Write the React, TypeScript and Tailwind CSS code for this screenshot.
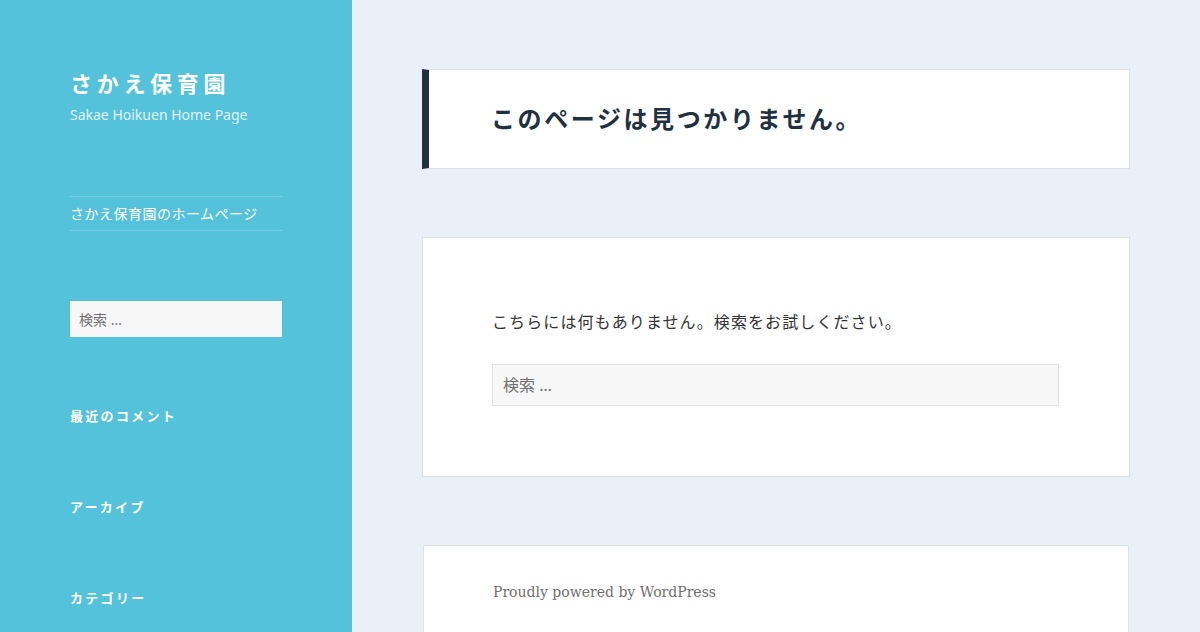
const sans = "font-['Noto_Sans','Noto_Sans_CJK_JP',sans-serif]";

const WidgetTitle = ({ children }: { children: string }) => (
  <h2 className="text-[13px] font-bold tracking-[2.3px] text-white leading-[20px]">{children}</h2>
);

export default function App() {
  return (
    <div className={`flex min-h-[632px] bg-[#e9f0f8] ${sans}`}>
      <aside className="w-[352px] shrink-0 bg-[#55c2dc] px-[70px] pt-[66px]">
        <h1 className="text-[22px] font-bold leading-[34px] tracking-[4.7px] text-white">さかえ保育園</h1>
        <p className="mt-[4px] text-[14px] leading-[22px] text-white/80">Sakae Hoikuen Home Page</p>

        <nav className="mt-[70px] w-[212px] border-y border-white/20">
          <a className="block py-[6px] text-[14px] leading-[21px] tracking-[0.5px] text-white">
            さかえ保育園のホームページ
          </a>
        </nav>

        <div className="mt-[70px] w-[212px]">
          <input
            type="search"
            placeholder="検索 …"
            className="h-[36px] w-full bg-[#f7f7f7] px-[9px] text-[14px] text-[#333] placeholder:text-[#707070] outline-none"
          />
        </div>

        <div className="mt-[69px] flex flex-col gap-[71px]">
          <WidgetTitle>最近のコメント</WidgetTitle>
          <WidgetTitle>アーカイブ</WidgetTitle>
          <WidgetTitle>カテゴリー</WidgetTitle>
        </div>
      </aside>

      <main className="flex w-[708px] flex-col gap-[68px] pl-[70px] pt-[69px] box-content">
        <header className="flex h-[100px] items-center border border-[#dbe3ea] border-l-[7px] border-l-[#22313f] bg-white pl-[62px]">
          <h1 className="text-[24px] font-bold tracking-[2.6px] text-[#22313f] leading-none">
            このページは見つかりません。
          </h1>
        </header>

        <section className="h-[240px] border border-[#dbe3ea] bg-white px-[69px] pt-[71px]">
          <p className="text-[16px] leading-[26px] tracking-[1.1px] text-[#333]">
            こちらには何もありません。検索をお試しください。
          </p>
          <input
            type="search"
            placeholder="検索 …"
            className="mt-[29px] h-[42px] w-[567px] border border-[#e2e2e2] bg-[#f7f7f7] px-[10px] text-[16px] text-[#333] placeholder:text-[#707070] outline-none"
          />
        </section>

        <footer className="mx-[1px] h-[100px] border border-[#dbe3ea] bg-white px-[69px] pt-[35px]">
          <p className="font-['DejaVu_Serif',serif] text-[14px] leading-[22px] text-[#707070]">
            Proudly powered by WordPress
          </p>
        </footer>
      </main>
    </div>
  );
}
